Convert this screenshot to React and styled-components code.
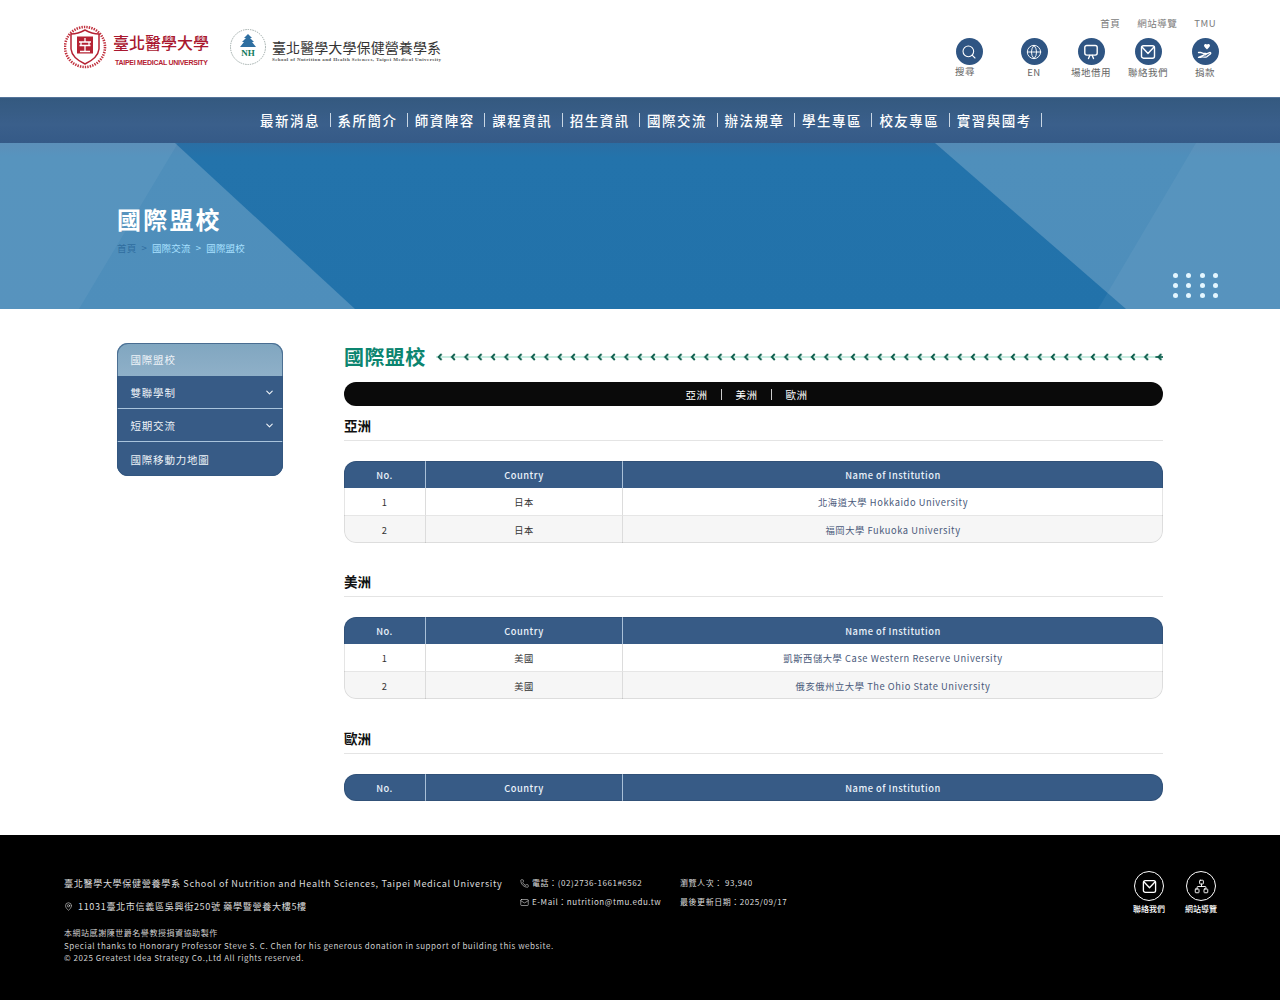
import React from "react";
import styled, { createGlobalStyle } from "styled-components";
import { Search, Globe, Network, Phone, MapPin, Mail, ChevronDown } from "lucide-react";

const Global = createGlobalStyle`
  html, body { margin: 0; padding: 0; background: #fff; }
  body { font-family: "Noto Sans CJK TC", "Noto Sans", sans-serif; color: #333; }
  * { box-sizing: border-box; }
  a { color: inherit; text-decoration: none; }
`;

const Page = styled.div`width: 1280px; min-height: 1000px; display: flex; flex-direction: column;`;

/* header */
const Header = styled.header`height: 97px; display: flex; justify-content: space-between; padding: 0 55px 0 64px; background: #fff;`;
const Logos = styled.div`display: flex; align-items: flex-start; padding-top: 25px; gap: 19px;`;
const Tools = styled.div`display: flex; flex-direction: column; align-items: flex-end;`;
const TopLinks = styled.nav`display: flex; gap: 17px; padding: 16px 9px 0 0; height: 38px; font-size: 9.5px; letter-spacing: .5px; line-height: 14px; color: #7b7b7b;`;
const ToolRow = styled.div`display: flex; gap: 17px;`;
const Tool = styled.a`width: 40px; display: flex; flex-direction: column; align-items: center; margin-right: ${p => p.$gapAfter || 0}px;`;
const ToolIcon = styled.span`width: 27px; height: 27px; border-radius: 50%; background: #2f5583; color: #fff; display: flex; align-items: center; justify-content: center;`;
const ToolLabel = styled.span`font-size: 9.5px; line-height: 14px; letter-spacing: .5px; color: #666; white-space: nowrap; transform: translate(${p => p.$nudge ? "-4px, -1px" : "0, 0"});`;

/* nav */
const MainNav = styled.nav`height: 46px; display: flex; align-items: center; padding-left: 260px; background: linear-gradient(#34597f, #3a5f8b 60%, #355a87); box-shadow: inset 0 1px 0 #54749a;`;
const NavItem = styled.a`font-size: 13.5px; font-weight: 500; line-height: 14px; letter-spacing: 1.5px; color: #fff; padding-right: 9.5px; margin-right: 6.93px; border-right: 1px solid #c8d6e4; white-space: nowrap;`;

/* banner */
const Banner = styled.section`position: relative; height: 166px; background: linear-gradient(#2a6ea4, #2373ab 14px, #2272aa); overflow: hidden; padding: 61px 0 0 117px;`;
const Facet = styled.div`position: absolute; inset: 0; clip-path: polygon(${p => p.$points}); background: rgba(255,255,255,${p => p.$alpha});`;
const BannerTitle = styled.h1`position: relative; margin: 0; font-size: 24px; line-height: 30px; letter-spacing: 2.2px; font-weight: 700; color: #fff;`;
const Crumbs = styled.div`position: relative; display: flex; gap: 5px; margin-top: 7px; font-size: 9.5px; line-height: 14px; letter-spacing: .2px; color: #a8e0ff;`;
const CrumbHome = styled.span`color: #2f6d9f;`;
const Dots = styled.div`position: absolute; left: 1172.5px; top: 129.5px; display: grid; grid-template-columns: repeat(4, 5px); grid-auto-rows: 5px; column-gap: 8.5px; row-gap: 5px;`;
const Dot = styled.i`display: block; border-radius: 50%; background: #e4f6ff;`;

/* content */
const Content = styled.main`display: flex; gap: 61px; padding: 34px 117px 34px; flex: 1;`;
const Side = styled.aside`position: relative; width: 166px; flex: none; align-self: flex-start; border-radius: 11px; overflow: hidden; background: #375b86;
  &::after { content: ""; position: absolute; inset: 0; border-radius: 11px; box-shadow: inset 0 0 0 1px rgba(50,85,125,.7); pointer-events: none; }`;
const SideItem = styled.a`height: ${p => p.$h || 33}px; display: flex; align-items: center; justify-content: space-between; padding: 0 8px 0 13.5px; font-size: 10.5px; letter-spacing: .8px; color: #eef3f8; background: ${p => p.$active ? "linear-gradient(#80a6c0, #8fb0c8)" : "#375b86"}; border-bottom: ${p => p.$rule ? "1.5px solid #a9c4dc" : "none"};`;

const Main = styled.div`flex: 1; min-width: 0;`;
const TitleRow = styled.div`display: flex; align-items: center; gap: 10px; height: 28px;`;
const PageTitle = styled.h2`margin: 0; font-size: 20px; line-height: 28px; font-weight: 700; letter-spacing: .4px; color: #0c8570; white-space: nowrap;`;
const ArrowLine = styled.svg`flex: 1; height: 10px; display: block;`;
const Pill = styled.div`margin-top: 11px; height: 24px; border-radius: 12px; background: #0a0a0a; display: flex; align-items: center; justify-content: center; padding-right: 14px; color: #fff;`;
const PillLink = styled.a`font-size: 10.5px; line-height: 11px; padding: 0 13.5px; letter-spacing: .5px; border-left: ${p => p.$first ? "none" : "1px solid #ccc"};`;

const Region = styled.section`margin-top: ${p => p.$top}px;`;
const RegionTitle = styled.h3`margin: 0 0 20px; height: 27px; padding-top: 1px; border-bottom: 1px solid #e4e4e4; font-size: 13.5px; line-height: 20px; font-weight: 700; color: #111;`;
const Table = styled.div`position: relative; border-radius: 12px; overflow: hidden; width: 819px;
  &::after { content: ""; position: absolute; inset: 0; border-radius: 12px; box-shadow: inset 0 0 0 1px rgba(0,0,0,.1); pointer-events: none; }`;
const GridRow = styled.div`display: grid; grid-template-columns: 81px 197px 1fr; height: ${p => p.$h}px; background: ${p => p.$bg};`;
const HeadCell = styled.div`display: flex; align-items: center; justify-content: center; font-size: 9.3px; font-weight: 500; letter-spacing: .5px; color: #eaf2fa; border-left: ${p => p.$first ? "none" : "1px solid #a9c0d8"};`;
const Cell = styled.div`display: flex; align-items: center; justify-content: center; font-size: 9.3px; letter-spacing: .56px; color: ${p => p.$link ? "#49597a" : "#333"}; border-left: ${p => p.$first ? "none" : "1px solid #dcdcdc"}; border-top: ${p => p.$sep ? "1px solid #e6e6e6" : "none"};`;

/* footer */
const Footer = styled.footer`height: 165px; background: #000; color: #dcdcdc; display: flex; padding: 41px 64px 0; font-size: 9.1px; letter-spacing: .63px;`;
const FootInfo = styled.div`width: 456px; flex: none;`;
const FootLine = styled.div`display: flex; align-items: center; gap: ${p => p.$gap || 0}px; line-height: 14px; white-space: nowrap; margin-bottom: ${p => p.$mb || 0}px;`;
const FootSmall = styled.div`font-size: 8px; line-height: 12.5px; letter-spacing: .54px; white-space: nowrap; color: #cfcfcf;`;
const FootCol = styled.div`width: ${p => p.$w}px; flex: none; font-size: 8px; letter-spacing: .55px; display: flex; flex-direction: column; gap: 5px;`;
const FootIcons = styled.div`margin: -5px 0 0 auto; display: flex; gap: 22px;`;
const FootLink = styled.a`width: 30px; display: flex; flex-direction: column; align-items: center; gap: 2px; color: #fff;`;
const FootCircle = styled.span`width: 30px; height: 30px; border: 1.5px solid #fff; border-radius: 50%; display: flex; align-items: center; justify-content: center;`;
const FootLabel = styled.span`font-size: 8px; line-height: 12px; letter-spacing: 0; white-space: nowrap; font-weight: 500;`;

const Envelope = ({ size = 16 }) => (
  <svg width={size} height={size} viewBox="0 0 16 16" fill="none" stroke="#fff" strokeWidth="1.4" strokeLinejoin="round" strokeLinecap="round">
    <rect x="1.5" y="1.8" width="13" height="12.4" rx="2" />
    <path d="M2 3l6 6.4L14 3" />
  </svg>
);
const Board = () => (
  <svg width="16" height="16" viewBox="0 0 16 16" fill="none" stroke="#fff" strokeWidth="1.4" strokeLinecap="round" strokeLinejoin="round">
    <rect x="1.8" y="1.5" width="12.4" height="9.6" rx="2" />
    <path d="M5.5 14.5l1.4-3.2M10.5 14.5l-1.4-3.2" />
  </svg>
);
const GiveHeart = () => (
  <svg width="18" height="18" viewBox="0 0 18 18">
    <path d="M11 1.6c-1-1.2-3-.6-3 1 0 1.500 1.800 2.700 3 3.800 1.200-1.100 3-2.300 3-3.800 0-1.600-2-2.200-3-1z" fill="#fff" />
    <path d="M2.500 9.500h2.200c.9 0 1.500.8 2.400.8h2.400c1.100 0 1.100 1.500 0 1.500H7.400M9.500 11.300l3.900-1.700c1.200-.5 1.900.8.900 1.500l-3.500 2.600c-.6.400-1.200.6-1.900.5l-2.500-.3c-.7-.1-1.300.1-1.900.5H2.500z" fill="none" stroke="#fff" strokeWidth="1.300" strokeLinejoin="round" strokeLinecap="round" />
  </svg>
);

const TmuLogo = () => (
  <svg width="146" height="46" viewBox="0 0 146 46" style={{ display: "block" }}>
    <circle cx="21" cy="22" r="20" fill="none" stroke="#c1323f" strokeWidth="2.6" strokeDasharray="1.4 1.1" />
    <path d="M7 9 Q14 9 21 5 Q28 9 35 9 L35 24 Q34 33 21 39 Q8 33 7 24Z" fill="#fff" stroke="#b52233" strokeWidth="1.5" />
    <rect x="13" y="11.500" width="16" height="17" fill="#b52233" />
    <path d="M21 13v4M15 17h12M17 17v3M25 17v3M15.500 20.500h11M21 20.500v6M16 26.500h10" stroke="#fff" strokeWidth="1.300" fill="none" />
    <text x="49" y="24" fontSize="16" fontWeight="500" fill="#a9172f" textLength="96" fontFamily='"Noto Sans CJK TC", sans-serif'>臺北醫學大學</text>
    <text x="51" y="40" fontSize="7" fontWeight="700" fill="#b52233" textLength="93" fontFamily='"Liberation Sans", sans-serif'>TAIPEI MEDICAL UNIVERSITY</text>
  </svg>
);
const NhLogo = () => (
  <svg width="213" height="42" viewBox="0 0 213 42" style={{ display: "block" }}>
    <circle cx="19" cy="22" r="17.500" fill="#fff" stroke="#9aa7a5" strokeWidth="1" strokeDasharray="1.400 1" />
    <path d="M19 9l4 4h-2l4 4h-2l4 5H11l4-5h-2l4-4h-2z" fill="#2f6fa1" />
    <text x="19" y="31" textAnchor="middle" fontSize="9" fontWeight="700" fill="#0f7a5c" fontFamily='"Liberation Serif", serif'>NH</text>
    <text x="43" y="28" fontSize="14" fontWeight="400" fill="#333" textLength="169" fontFamily='"Noto Sans CJK TC", sans-serif'>臺北醫學大學保健營養學系</text>
    <text x="43" y="36" fontSize="5" fontWeight="700" fill="#555" textLength="169" fontFamily='"Liberation Serif", serif'>School of Nutrition and Health Sciences, Taipei Medical University</text>
  </svg>
);

const navItems = ["最新消息", "系所簡介", "師資陣容", "課程資訊", "招生資訊", "國際交流", "辦法規章", "學生專區", "校友專區", "實習與國考"];
const regions = [
  { name: "亞洲", top: 8, rows: [["日本", "北海道大學 Hokkaido University"], ["日本", "福岡大學 Fukuoka University"]] },
  { name: "美洲", top: 27, rows: [["美國", "凱斯西儲大學 Case Western Reserve University"], ["美國", "俄亥俄州立大學 The Ohio State University"]] },
  { name: "歐洲", top: 28, rows: [] },
];

const RegionBlock = ({ region }) => (
  <Region $top={region.top}>
    <RegionTitle>{region.name}</RegionTitle>
    <Table>
      <GridRow $h={27} $bg="#375b86">
        <HeadCell $first>No.</HeadCell>
        <HeadCell>Country</HeadCell>
        <HeadCell>Name of Institution</HeadCell>
      </GridRow>
      {region.rows.map((row, i) => (
        <GridRow key={row[1]} $h={i ? 28 : 27} $bg={i ? "#f6f6f6" : "#fff"}>
          <Cell $first $sep={i > 0}>{i + 1}</Cell>
          <Cell $sep={i > 0}>{row[0]}</Cell>
          <Cell $link $sep={i > 0}>{row[1]}</Cell>
        </GridRow>
      ))}
    </Table>
  </Region>
);

export default function App() {
  return (
    <Page>
      <Global />
      <Header>
        <Logos>
          <TmuLogo />
          <NhLogo />
        </Logos>
        <Tools>
          <TopLinks>
            <a>首頁</a>
            <a>網站導覽</a>
            <a>TMU</a>
          </TopLinks>
          <ToolRow>
            <Tool $gapAfter={8}><ToolIcon><Search size={16} strokeWidth={1.6} /></ToolIcon><ToolLabel $nudge>搜尋</ToolLabel></Tool>
            <Tool><ToolIcon><Globe size={16} strokeWidth={1.4} /></ToolIcon><ToolLabel>EN</ToolLabel></Tool>
            <Tool><ToolIcon><Board /></ToolIcon><ToolLabel>場地借用</ToolLabel></Tool>
            <Tool><ToolIcon><Envelope /></ToolIcon><ToolLabel>聯絡我們</ToolLabel></Tool>
            <Tool><ToolIcon><GiveHeart /></ToolIcon><ToolLabel>捐款</ToolLabel></Tool>
          </ToolRow>
        </Tools>
      </Header>

      <MainNav>
        {navItems.map(n => <NavItem key={n}>{n}</NavItem>)}
      </MainNav>

      <Banner>
        <Facet $alpha={0.2} $points="0 0, 175px 0, 355px 166px, 0 166px" />
        <Facet $alpha={0.05} $points="0 0, 178px 0, 79px 166px, 0 166px" />
        <Facet $alpha={0.2} $points="935px 0, 1280px 0, 1280px 166px, 1126px 166px" />
        <Facet $alpha={0.05} $points="1196px 0, 1280px 0, 1280px 166px, 1098px 166px" />
        <BannerTitle>國際盟校</BannerTitle>
        <Crumbs>
          <CrumbHome>首頁</CrumbHome>
          <CrumbHome>&gt;</CrumbHome>
          <span>國際交流</span>
          <span>&gt;</span>
          <span>國際盟校</span>
        </Crumbs>
        <Dots>{Array.from({ length: 12 }, (_, i) => <Dot key={i} />)}</Dots>
      </Banner>

      <Content>
        <Side>
          <SideItem $active>國際盟校</SideItem>
          <SideItem $rule><span>雙聯學制</span><ChevronDown size={11} strokeWidth={2.4} /></SideItem>
          <SideItem $rule><span>短期交流</span><ChevronDown size={11} strokeWidth={2.4} /></SideItem>
          <SideItem $h={34}>國際移動力地圖</SideItem>
        </Side>
        <Main>
          <TitleRow>
            <PageTitle>國際盟校</PageTitle>
            <ArrowLine>
              <defs>
                <pattern id="chev" x="0" y="0" width="13.33" height="10" patternUnits="userSpaceOnUse">
                  <path d="M0 5h13.33" stroke="#8fd8c0" strokeWidth="1" />
                  <path d="M5.500 2L2.600 5l2.900 3" stroke="#0a5c4a" strokeWidth="1.800" fill="none" />
                </pattern>
              </defs>
              <rect width="100%" height="10" fill="url(#chev)" />
              <svg x="100%" overflow="visible">
                <path d="M-8 5h8" stroke="#0a5c4a" strokeWidth="1.600" />
              </svg>
            </ArrowLine>
          </TitleRow>
          <Pill>
            <PillLink $first>亞洲</PillLink>
            <PillLink>美洲</PillLink>
            <PillLink>歐洲</PillLink>
          </Pill>
          {regions.map(r => <RegionBlock key={r.name} region={r} />)}
        </Main>
      </Content>

      <Footer>
        <FootInfo>
          <FootLine $mb={9}>臺北醫學大學保健營養學系 School of Nutrition and Health Sciences, Taipei Medical University</FootLine>
          <FootLine $gap={5} $mb={14}><MapPin size={9} strokeWidth={1.6} />11031臺北市信義區吳興街250號 藥學暨營養大樓5樓</FootLine>
          <FootSmall>本網站感謝陳世爵名譽教授捐資協助製作</FootSmall>
          <FootSmall>Special thanks to Honorary Professor Steve S. C. Chen for his generous donation in support of building this website.</FootSmall>
          <FootSmall>© 2025 Greatest Idea Strategy Co.,Ltd All rights reserved.</FootSmall>
        </FootInfo>
        <FootCol $w={160}>
          <FootLine $gap={3}><Phone size={9} strokeWidth={1.6} />電話：(02)2736-1661#6562</FootLine>
          <FootLine $gap={3}><Mail size={9} strokeWidth={1.6} />E-Mail：nutrition@tmu.edu.tw</FootLine>
        </FootCol>
        <FootCol $w={160}>
          <FootLine>瀏覽人次： 93,940</FootLine>
          <FootLine>最後更新日期：2025/09/17</FootLine>
        </FootCol>
        <FootIcons>
          <FootLink><FootCircle><Envelope size={15} /></FootCircle><FootLabel>聯絡我們</FootLabel></FootLink>
          <FootLink><FootCircle><Network size={15} strokeWidth={1.5} /></FootCircle><FootLabel>網站導覽</FootLabel></FootLink>
        </FootIcons>
      </Footer>
    </Page>
  );
}
